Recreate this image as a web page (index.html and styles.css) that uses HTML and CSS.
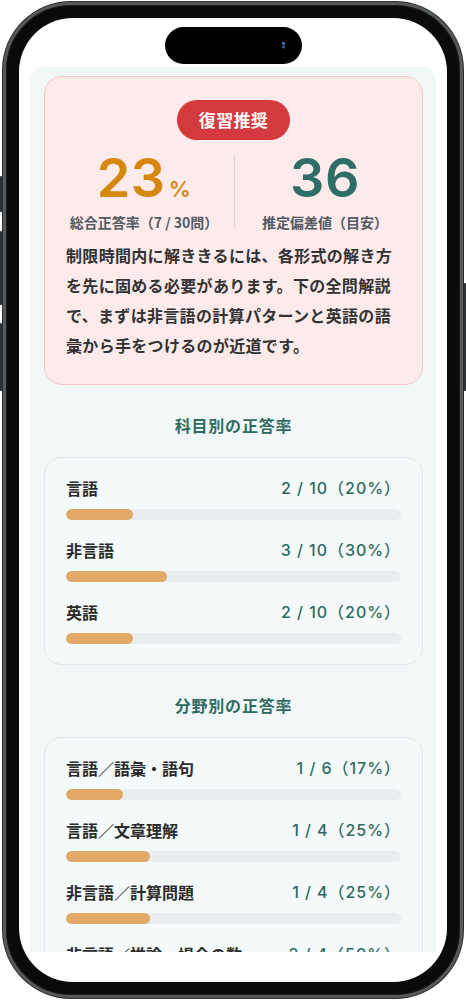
FILE: index.html
```html
<!DOCTYPE html>
<html lang="ja">
<head>
    <meta charset="UTF-8">
    <meta name="viewport" content="width=device-width, initial-scale=1.0">
    <title>模試結果</title>
    <link rel="stylesheet" href="styles.css">
</head>
<body>
    <div class="phone">
        <span class="side-btn btn-action"></span>
        <span class="side-btn btn-vol-up"></span>
        <span class="side-btn btn-vol-down"></span>
        <span class="side-btn btn-power"></span>

        <div class="screen">
            <div class="island"><span class="cam"></span></div>

            <main class="panel">
                <section class="alert-card">
                    <div class="badge">復習推奨</div>
                    <div class="stats">
                        <div class="stat">
                            <div class="stat-num orange">23<span class="unit">%</span></div>
                            <div class="stat-label">総合正答率（7 / 30問）</div>
                        </div>
                        <div class="stat-divider"></div>
                        <div class="stat">
                            <div class="stat-num green">36</div>
                            <div class="stat-label">推定偏差値（目安）</div>
                        </div>
                    </div>
                    <p class="advice">制限時間内に解ききるには、各形式の解き方を先に固める必要があります。下の全問解説で、まずは非言語の計算パターンと英語の語彙から手をつけるのが近道です。</p>
                </section>

                <h2 class="section-title">科目別の正答率</h2>
                <section class="score-card">
                    <div class="score-row">
                        <div class="score-head">
                            <span class="score-name">言語</span>
                            <span class="score-value">2 / 10（20%）</span>
                        </div>
                        <div class="bar"><div class="bar-fill" style="width: 20%"></div></div>
                    </div>
                    <div class="score-row">
                        <div class="score-head">
                            <span class="score-name">非言語</span>
                            <span class="score-value">3 / 10（30%）</span>
                        </div>
                        <div class="bar"><div class="bar-fill" style="width: 30%"></div></div>
                    </div>
                    <div class="score-row">
                        <div class="score-head">
                            <span class="score-name">英語</span>
                            <span class="score-value">2 / 10（20%）</span>
                        </div>
                        <div class="bar"><div class="bar-fill" style="width: 20%"></div></div>
                    </div>
                </section>

                <h2 class="section-title">分野別の正答率</h2>
                <section class="score-card">
                    <div class="score-row">
                        <div class="score-head">
                            <span class="score-name">言語／語彙・語句</span>
                            <span class="score-value">1 / 6（17%）</span>
                        </div>
                        <div class="bar"><div class="bar-fill" style="width: 17%"></div></div>
                    </div>
                    <div class="score-row">
                        <div class="score-head">
                            <span class="score-name">言語／文章理解</span>
                            <span class="score-value">1 / 4（25%）</span>
                        </div>
                        <div class="bar"><div class="bar-fill" style="width: 25%"></div></div>
                    </div>
                    <div class="score-row">
                        <div class="score-head">
                            <span class="score-name">非言語／計算問題</span>
                            <span class="score-value">1 / 4（25%）</span>
                        </div>
                        <div class="bar"><div class="bar-fill" style="width: 25%"></div></div>
                    </div>
                    <div class="score-row">
                        <div class="score-head">
                            <span class="score-name">非言語／推論・場合の数</span>
                            <span class="score-value">2 / 4（50%）</span>
                        </div>
                        <div class="bar"><div class="bar-fill" style="width: 50%"></div></div>
                    </div>
                </section>
            </main>
        </div>
    </div>
</body>
</html>
```

FILE: styles.css
```css
* {
    box-sizing: border-box;
}

body {
    margin: 0;
    background: #ffffff;
    font-family: "Noto Sans CJK JP", "Noto Sans", sans-serif;
    width: 466px;
    height: 1000px;
    overflow: hidden;
}

/* phone mockup */
.phone {
    position: relative;
    margin: 2px 3px 0;
    height: 996px;
    padding: 13px;
    background: #0a0a0a;
    border: 3px solid #55595c;
    border-radius: 68px;
    box-shadow: 0 0 0 1px #2b2d2f, inset 0 0 0 1px #1c1c1c;
}

.side-btn {
    position: absolute;
    width: 4px;
    background: #2f3234;
    border-radius: 2px;
}

.btn-action   { left: -7px; top: 171px; height: 36px; }
.btn-vol-up   { left: -7px; top: 226px; height: 74px; }
.btn-vol-down { left: -7px; top: 318px; height: 68px; }
.btn-power    { right: -7px; top: 278px; height: 108px; }

.screen {
    position: relative;
    height: 100%;
    background: #ffffff;
    border-radius: 54px;
    overflow: hidden;
    padding: 49px 11px 30px;
}

.island {
    position: absolute;
    top: 9px;
    left: 146px;
    width: 137px;
    height: 37px;
    background: #000;
    border-radius: 19px;
}

.cam {
    position: absolute;
    top: 14px;
    right: 16px;
    width: 5px;
    height: 8px;
    border-radius: 3px;
    background: radial-gradient(circle at 50% 30%, #3d7fb8 0 1px, transparent 2px),
                radial-gradient(circle at 50% 75%, #2f6a9e 0 1px, transparent 2px);
}

/* app content */
.panel {
    height: 100%;
    overflow: hidden;
    background: #f1f7f7;
    border-radius: 14px 14px 0 0;
    padding: 9px 13px 0 14px;
}

.alert-card {
    display: flex;
    flex-direction: column;
    align-items: center;
    background: #fdeaea;
    border: 1px solid #f2c7c9;
    border-radius: 18px;
    padding: 23px 21px 24px;
    text-align: center;
}

.badge {
    height: 40px;
    line-height: 40px;
    padding: 0 22px;
    border-radius: 20px;
    background: #d4393d;
    color: #fff;
    font-size: 17px;
    font-weight: 700;
    letter-spacing: 0.02em;
}

.stats {
    align-self: stretch;
    display: grid;
    grid-template-columns: 1fr 1px 1fr;
    margin: 11px -14px 0 -12px;
}

.stat-divider {
    background: #ecd0d1;
    margin: 4px 0 3px;
}

.stat-num {
    height: 54px;
    font-family: Inter, "Noto Sans", sans-serif;
    font-size: 54px;
    font-weight: 600;
    line-height: 54px;
    letter-spacing: 0.01em;
}

.stat-num.orange {
    color: #d6870d;
}

.stat-num.green {
    color: #2f6e66;
}

.unit {
    font-size: 22px;
    line-height: 1;
    margin-left: 3px;
}

.stat-label {
    margin-top: 8px;
    font-size: 14px;
    line-height: 18px;
    font-weight: 700;
    color: #555b63;
}

.advice {
    align-self: stretch;
    margin: 9px 0 0;
    text-align: left;
    font-size: 16px;
    line-height: 30px;
    font-weight: 700;
    letter-spacing: 0.02em;
    color: #333333;
}

.section-title {
    margin: 28px 0 20px;
    text-align: center;
    font-size: 16px;
    line-height: 24px;
    font-weight: 700;
    letter-spacing: 0.05em;
    color: #2f6b62;
}

.score-card {
    background: #f4f9f9;
    border: 1px solid #dfe9e9;
    border-radius: 18px;
    padding: 18px 21px 20px;
    display: flex;
    flex-direction: column;
    gap: 18px;
}

.score-head {
    display: flex;
    justify-content: space-between;
    align-items: center;
    height: 24px;
    font-size: 16px;
    line-height: 24px;
}

.score-name {
    font-weight: 700;
    color: #2b2b2b;
}

.score-value {
    font-family: Inter, "Noto Sans CJK JP", sans-serif;
    font-weight: 500;
    color: #2f6b62;
    letter-spacing: 0.06em;
}

.bar {
    margin-top: 9px;
    height: 11px;
    background: #e8eef0;
    border-radius: 6px;
    overflow: hidden;
}

.bar-fill {
    height: 100%;
    background: #e2a866;
    border-radius: 6px;
}
```
